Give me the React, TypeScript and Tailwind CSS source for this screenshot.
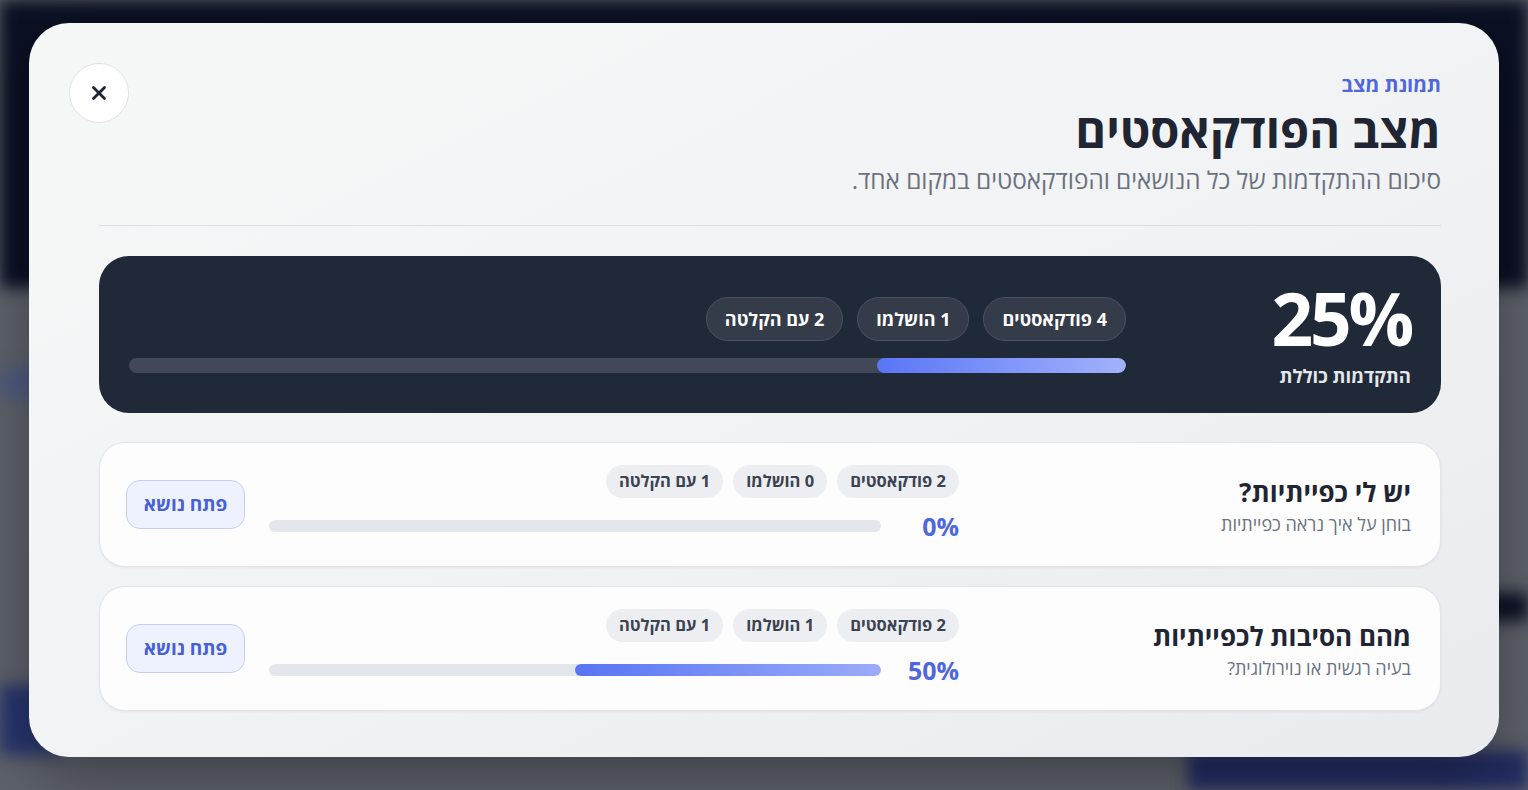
import { X } from "lucide-react";

interface Topic {
  id: string;
  title: string;
  subtitle: string;
  podcasts: number;
  done: number;
  recorded: number;
  percent: number;
}

const TOPICS: Topic[] = [
  {
    id: "compulsion",
    title: "יש לי כפייתיות?",
    subtitle: "בוחן על איך נראה כפייתיות",
    podcasts: 2,
    done: 0,
    recorded: 1,
    percent: 0,
  },
  {
    id: "causes",
    title: "מהם הסיבות לכפייתיות",
    subtitle: "בעיה רגשית או נוירולוגית?",
    podcasts: 2,
    done: 1,
    recorded: 1,
    percent: 50,
  },
];

const FONT = "font-['Open_Sans','DejaVu_Sans',sans-serif]";

function DarkPill({ children }: { children: React.ReactNode }) {
  return (
    <span className="flex h-[44px] items-center rounded-full border border-[#4a5162] bg-[#343b49] px-[18px] text-[18px] leading-none font-bold text-white">
      {children}
    </span>
  );
}

function LightPill({ children }: { children: React.ReactNode }) {
  return (
    <span className="flex h-[33px] items-center rounded-full bg-[#eceef1] px-[13px] text-[16.5px] leading-none font-bold text-[#3b4250]">
      {children}
    </span>
  );
}

function TopicCard({ topic }: { topic: Topic }) {
  return (
    <div className="flex h-[125px] items-center gap-6 rounded-[26px] border border-[#e2e5e9] bg-[#fdfdfe] pr-[29px] pl-[26px] shadow-[0_1px_3px_rgba(15,23,42,0.06)]">
      <div className="w-[428px] shrink-0">
        <div className="text-[26px] leading-[36px] font-bold text-[#1f2533]">
          {topic.title}
        </div>
        <div className="mt-[2px] text-[18px] leading-[24px] text-[#6b7280]">
          {topic.subtitle}
        </div>
      </div>

      <div className="flex flex-1 flex-col gap-[10px]">
        <div className="flex gap-[10px]">
          <LightPill>{topic.podcasts} פודקאסטים</LightPill>
          <LightPill>{topic.done} הושלמו</LightPill>
          <LightPill>{topic.recorded} עם הקלטה</LightPill>
        </div>
        <div className="flex items-center gap-6">
          <div className="w-[54px] shrink-0 text-[25px] leading-[36px] font-bold text-[#4f67dc]">
            {topic.percent}%
          </div>
          <div className="h-[12px] flex-1 overflow-hidden rounded-full bg-[#e3e6ea]">
            <div
              className="h-full rounded-full bg-gradient-to-l from-[#9cabf8] to-[#5874f2]"
              style={{ width: `${topic.percent}%` }}
            />
          </div>
        </div>
      </div>

      <button
        type="button"
        className="flex h-[49px] w-[119px] shrink-0 items-center justify-center rounded-[14px] border border-[#c6cef7] bg-[#eef1fe] text-[19px] font-bold text-[#4660d6]"
      >
        פתח נושא
      </button>
    </div>
  );
}

export default function App() {
  const total = 25;

  return (
    <div className={`relative h-[790px] w-full overflow-hidden bg-[#5e626b] ${FONT}`}>
      {/* blurred page sitting behind the dialog */}
      <div className="flex h-full flex-col blur-[8px]">
        <div className="h-[288px] bg-[#0b1023]" />
        <div className="flex flex-1 flex-col justify-between pt-[80px]">
          <div className="flex justify-between">
            <div className="h-[30px] w-[60px] bg-[#4f5a80]" />
            <div className="mt-[225px] h-[28px] w-[60px] bg-[#0b1023]" />
          </div>
          <div className="flex items-end justify-between">
            <div className="mb-[35px] h-[70px] w-[60px] bg-[#27356e]" />
            <div className="h-[40px] w-[340px] bg-[#222c62]" />
          </div>
        </div>
      </div>

      <div className="absolute inset-0 flex justify-center pt-[23px]">
        <div
          dir="rtl"
          className="relative h-[734px] w-[1470px] rounded-[40px] bg-gradient-to-br from-[#f6f7f7] via-[#f2f3f4] to-[#e9ebee] pt-[48px] pr-[58px] pl-[70px] shadow-[0_20px_60px_rgba(0,0,0,0.35)]"
        >
          <button
            type="button"
            aria-label="סגור"
            className="absolute top-[40px] left-[40px] flex h-[60px] w-[60px] items-center justify-center rounded-full border border-[#dfe2e6] bg-white text-[#1f2533]"
          >
            <X size={22} strokeWidth={3} />
          </button>

          <header>
            <div className="text-[20px] leading-[28px] font-bold text-[#4f67dc]">
              תמונת מצב
            </div>
            <h1 className="mt-[3px] text-[47px] leading-[56px] font-bold text-[#1f2533]">
              מצב הפודקאסטים
            </h1>
            <p className="mt-[5px] text-[24.3px] leading-[34px] text-[#6b7280]">
              סיכום ההתקדמות של כל הנושאים והפודקאסטים במקום אחד.
            </p>
          </header>

          <div className="mt-[28px] h-px bg-[#dcdfe3]" />

          <section className="mt-[30px] flex h-[157px] items-center gap-[45px] rounded-[30px] bg-[#202938] px-[30px]">
            <div className="w-[240px] shrink-0">
              <div className="text-[73px] leading-none font-bold tracking-[-0.045em] text-white">
                {total}%
              </div>
              <div className="mt-[10px] text-[18.5px] leading-[24px] font-bold text-[#e5e7eb]">
                התקדמות כוללת
              </div>
            </div>
            <div className="flex flex-1 flex-col gap-[17px]">
              <div className="flex gap-[14px]">
                <DarkPill>4 פודקאסטים</DarkPill>
                <DarkPill>1 הושלמו</DarkPill>
                <DarkPill>2 עם הקלטה</DarkPill>
              </div>
              <div className="h-[15px] overflow-hidden rounded-full bg-[#414857]">
                <div
                  className="h-full rounded-full bg-gradient-to-l from-[#a3b1fb] to-[#5a75f5]"
                  style={{ width: `${total}%` }}
                />
              </div>
            </div>
          </section>

          <div className="mt-[29px] flex flex-col gap-[19px]">
            {TOPICS.map((t) => (
              <TopicCard key={t.id} topic={t} />
            ))}
          </div>
        </div>
      </div>
    </div>
  );
}
